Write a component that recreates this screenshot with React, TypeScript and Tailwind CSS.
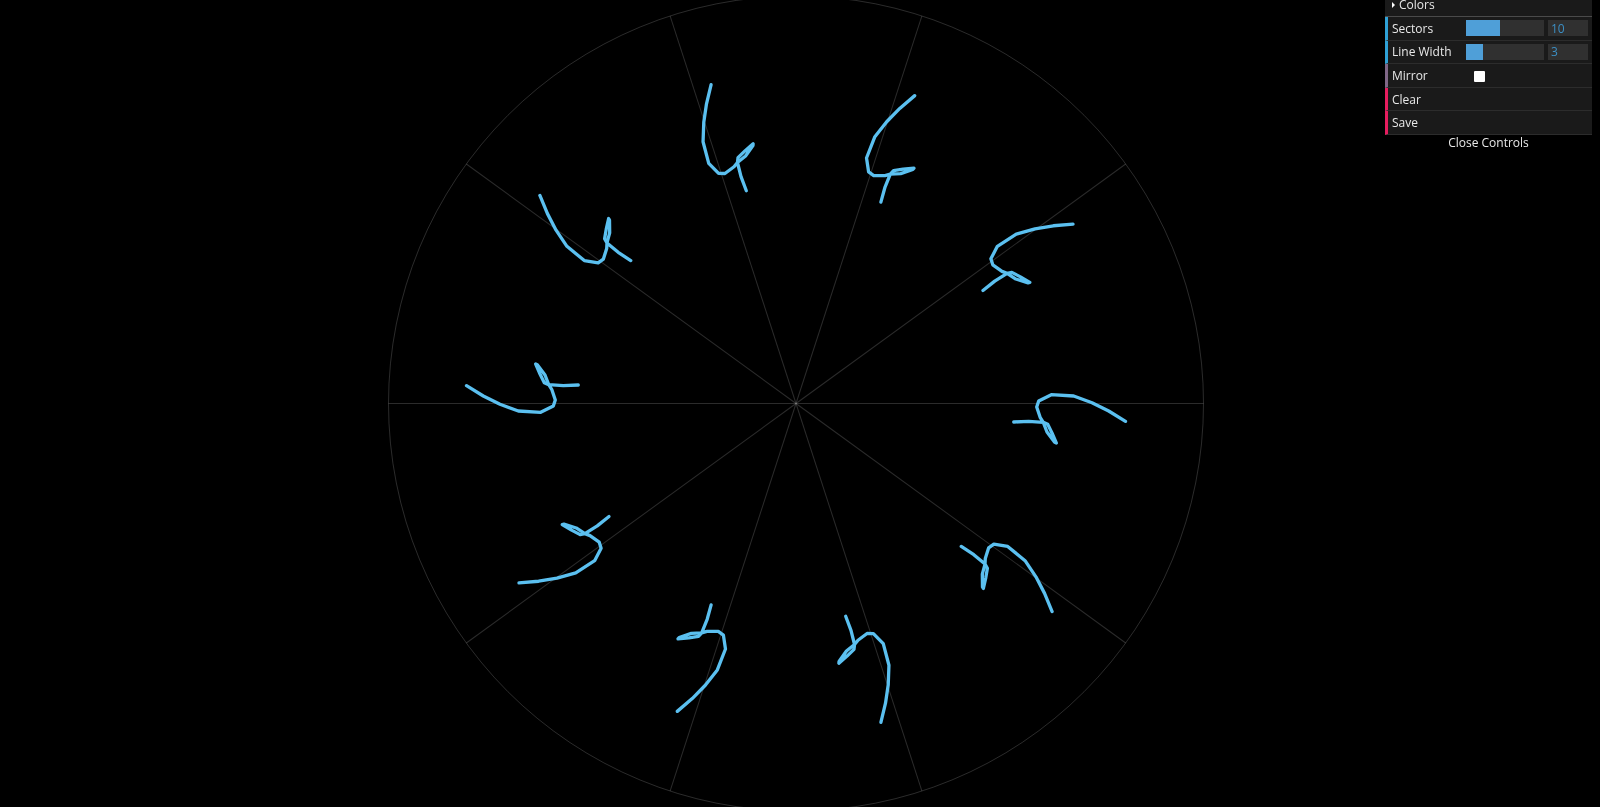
const CX = 796
const CY = 403.5
const R = 407.5

// one stroke, as drawn in the left sector; the others are rotated copies
const STROKE =
  '466.5,385.7 483.3,396 500,404.3 518.3,411 540.7,412.3 553.3,406 555.3,400 551.7,389.3 548.7,384.7 544.3,382.7 540,374 535.7,364 537.3,364.7 545,375 548.7,384.7 563.3,385.7 578.3,385'

const SECTORS = Array.from({ length: 10 }, (_, i) => i * 36)

function Kaleidoscope() {
  return (
    <svg width={1600} height={807} viewBox="0 0 1600 807" className="block">
      <circle cx={CX} cy={CY} r={R} fill="none" stroke="#ffffff" strokeOpacity={0.17} strokeWidth={1} />
      {SECTORS.map((deg) => (
        <g key={deg} transform={`rotate(${deg} ${CX} ${CY})`}>
          <line x1={CX} y1={CY} x2={CX - R} y2={CY} stroke="#ffffff" strokeOpacity={0.17} strokeWidth={1} />
          <polyline
            points={STROKE}
            fill="none"
            stroke="#5bc0f0"
            strokeWidth={3.3}
            strokeLinecap="round"
            strokeLinejoin="round"
          />
        </g>
      ))}
    </svg>
  )
}

function Row({ accent, label, children }: { accent: string; label: string; children?: React.ReactNode }) {
  return (
    <div className={`flex h-[23.6px] items-center border-b border-[#2c2c2c] border-l-[3px] pl-[4px] ${accent}`}>
      <span className="w-[74px] shrink-0 pt-[1px]">{label}</span>
      {children}
    </div>
  )
}

function SliderRow({ label, percent, value }: { label: string; percent: number; value: string }) {
  return (
    <Row accent="border-l-[#2fa1d6]" label={label}>
      <div className="h-[16px] w-[78px] bg-[#303030]">
        <div className="h-full bg-[#4f9fd8]" style={{ width: `${percent}%` }} />
      </div>
      <div className="ml-[4px] flex h-[16px] w-[40px] items-center bg-[#303030] pl-[3px] pt-[1px] text-[#3c8fc4]">{value}</div>
    </Row>
  )
}

function Controls() {
  return (
    <div className="absolute right-[8px] top-[-6.4px] w-[207px] text-[12px] leading-none text-[#e8e8e8] [font-family:'Open_Sans','Noto_Sans',sans-serif]">
      <div className="bg-[#1a1a1a]">
        <div className="flex h-[23.4px] items-center border-b border-[#4a4a4a] pl-[7px] pt-[1px]">
          <span className="mr-[4px] h-0 w-0 border-y-[3px] border-l-[3px] border-y-transparent border-l-white" />
          Colors
        </div>
        <SliderRow label="Sectors" percent={44} value="10" />
        <SliderRow label="Line Width" percent={22} value="3" />
        <Row accent="border-l-[#806787]" label="Mirror">
          <span className="ml-[8px] mt-[2px] h-[11px] w-[11px] rounded-[1px] bg-white" />
        </Row>
        <Row accent="border-l-[#e61d5f]" label="Clear" />
        <Row accent="border-l-[#e61d5f]" label="Save" />
      </div>
      <div className="flex h-[17px] items-center justify-center bg-black">Close Controls</div>
    </div>
  )
}

export default function App() {
  return (
    <div className="relative h-[807px] w-[1600px] overflow-hidden bg-black blur-[0.4px]">
      <Kaleidoscope />
      <Controls />
    </div>
  )
}
